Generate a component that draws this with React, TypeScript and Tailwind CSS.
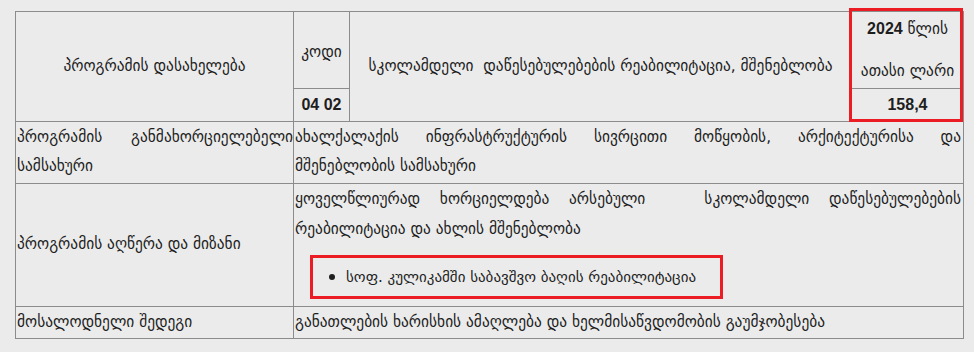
export default function App() {
  const cell = "border border-[#8c8c8c] p-0";
  return (
    <div className="min-h-[352px] w-[974px] bg-[#ebebeb] pl-[15px] pt-[11px] text-[#1e1e1e] [font-family:'DejaVu_Sans','Liberation_Sans',sans-serif]">
      <div className="relative w-[948px]">
        <table className="w-[948px] table-fixed border-collapse text-[15.4px]">
          <colgroup>
            <col className="w-[278px]" />
            <col className="w-[56px]" />
            <col className="w-[502px]" />
            <col className="w-[112px]" />
          </colgroup>
          <tbody>
            <tr className="h-[77px]">
              <td rowSpan={2} className={`${cell} text-center align-middle`}>
                პროგრამის დასახელება
              </td>
              <td className={`${cell} text-center align-middle pt-[6px]`}>კოდი</td>
              <td rowSpan={2} className={`${cell} text-center align-middle`}>
                სკოლამდელი&nbsp; დაწესებულებების რეაბილიტაცია, მშენებლობა
              </td>
              <td className={`${cell} text-center align-middle`}>
                <div className="flex flex-col gap-[20px] leading-[22px]">
                  <span>
                    <span className="font-bold [font-family:'Liberation_Sans',sans-serif] text-[16px]">2024</span> წლის
                  </span>
                  <span>ათასი ლარი</span>
                </div>
              </td>
            </tr>
            <tr className="h-[33px]">
              <td className={`${cell} text-center align-middle font-bold text-[16px] [font-family:'Liberation_Sans',sans-serif]`}>
                04 02
              </td>
              <td className={`${cell} text-center align-middle font-bold text-[16px] [font-family:'Liberation_Sans',sans-serif]`}>
                158,4
              </td>
            </tr>
            <tr className="h-[62px]">
              <td className={`${cell} align-top text-justify leading-[29px] pt-[1px] pl-[1px]`}>
                პროგრამის განმახორციელებელი სამსახური
              </td>
              <td colSpan={3} className={`${cell} align-top text-justify leading-[29px] pt-[1px] pl-[1px] pr-[2px]`}>
                <span className="block [text-align-last:justify]">
                  ახალქალაქის ინფრასტრუქტურის სივრცითი მოწყობის, არქიტექტურისა და
                </span>
                მშენებლობის სამსახური
              </td>
            </tr>
            <tr className="h-[122px]">
              <td className={`${cell} align-middle pl-[1px]`}>პროგრამის აღწერა და მიზანი</td>
              <td colSpan={3} className={`${cell} align-top pl-[1px] pr-[2px]`}>
                <p className="text-justify leading-[30px]">
                  ყოველწლიურად ხორციელდება არსებული&nbsp;&nbsp; სკოლამდელი დაწესებულებების რეაბილიტაცია და ახლის მშენებლობა
                </p>
                <div className="ml-[15px] mt-[11px] mb-[7px] flex h-[44px] w-[413px] items-center border-[3px] border-[#ec1c24] pl-[16px]">
                  <span className="mr-[11px] h-[6px] w-[6px] shrink-0 rounded-full bg-[#1e1e1e]" />
                  <span className="whitespace-nowrap text-[15px]">სოფ. კულიკამში საბავშვო ბაღის რეაბილიტაცია</span>
                </div>
              </td>
            </tr>
            <tr className="h-[32px]">
              <td className={`${cell} align-middle pl-[1px]`}>მოსალოდნელი შედეგი</td>
              <td colSpan={3} className={`${cell} align-middle pl-[1px]`}>
                განათლების ხარისხის ამაღლება და ხელმისაწვდომობის გაუმჯობესება
              </td>
            </tr>
          </tbody>
        </table>
        <div className="pointer-events-none absolute left-[834px] top-[-3px] h-[114px] w-[114px] border-[3px] border-[#ec1c24]" />
      </div>
    </div>
  );
}
